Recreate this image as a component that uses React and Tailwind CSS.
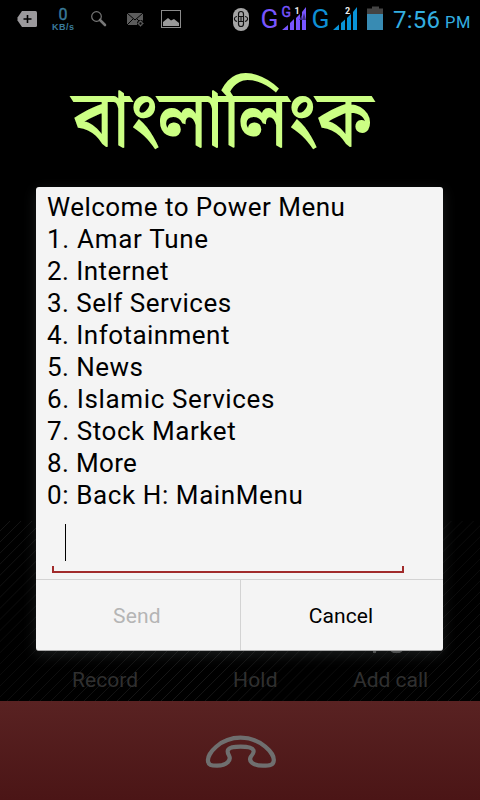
function StatusBar() {
  return (
    <header className="flex h-10 shrink-0 items-center bg-black">
      <svg className="h-10 w-[190px] shrink-0" viewBox="0 0 190 40" fill="none">
        <path d="M22 11H35.500Q37 11 37 12.500V25.500Q37 27 35.500 27H22L17.500 20.500V17.500Z" fill="#9b999c" />
        <path d="M27.500 15V23M23.500 19H31.500" stroke="#000" strokeWidth="1.600" />
        <text x="63" y="20" textAnchor="middle" fontSize="16" fontFamily="Roboto, sans-serif" fill="#3a7b9b" stroke="#3a7b9b" strokeWidth=".4">0</text>
        <text x="52" y="29.500" fontSize="9" textLength="22" fontFamily="Liberation Sans, sans-serif" fontWeight="700" fill="#3a7b9b">KB/s</text>
        <circle cx="96.500" cy="16.500" r="4.800" stroke="#777" strokeWidth="1.200" />
        <path d="M100 20L105 25" stroke="#777" strokeWidth="2.600" strokeLinecap="round" />
        <path d="M127 13H143V25H127Z" fill="#5c5c5c" />
        <path d="M127 13L135 20L143 13M127 25L133 19M143 25L137 19" stroke="#000" strokeWidth="1" />
        <circle cx="140.500" cy="23.500" r="3.500" fill="#000" />
        <circle cx="140.500" cy="23.500" r="1.800" stroke="#666" strokeWidth="1.200" />
        <path d="M140.500 20.500V21.500M140.500 25.500V26.500M137.500 23.500H138.500M142.500 23.500H143.500" stroke="#666" />
        <rect x="161.500" y="10.500" width="19" height="17" stroke="#8b8b8b" />
        <path d="M163 26V22L168 18L171 20.500L174 19L179 23V26Z" fill="#999" />
      </svg>
      <svg className="ml-auto h-10 w-[260px] shrink-0" viewBox="220 0 260 40" fill="none">
        <rect x="233" y="8" width="16" height="23" rx="8" fill="#a5a5a5" />
        <rect x="238.500" y="11.500" width="5" height="15" rx="2.500" stroke="#111" strokeWidth="1.200" />
        <path d="M238 16.500H244M238 21.500H244M237 16.500Q234 17 234.500 19.500Q235 21 237 21.500M245 16.500Q248 17 247.500 19.500Q247 21 245 21.500M241 16V22" stroke="#111" strokeWidth="1.100" />
        <text x="260.500" y="28" fontSize="26" textLength="18" lengthAdjust="spacingAndGlyphs" fontFamily="Roboto, sans-serif" fill="#7855ff">G</text>
        <text x="281.500" y="17.300" fontSize="14" textLength="9.500" lengthAdjust="spacingAndGlyphs" fontFamily="Roboto, sans-serif" fill="#7855ff" stroke="#7855ff" strokeWidth=".4">G</text>
        <path d="M282 30L288 25V30ZM290 23L294 19V30H290ZM296 18L300 14V30H296ZM302 12L306 7V30H302Z" fill="#7855ff" />
        <path d="M299 20L302 15V20ZM302 20L304 13L306 20Z" fill="#3d2b85" />
        <text x="294.500" y="14" fontSize="9" fontFamily="Roboto, sans-serif" fontWeight="700" fill="#eee">1</text>
        <text x="311.500" y="28" fontSize="26" textLength="18" lengthAdjust="spacingAndGlyphs" fontFamily="Roboto, sans-serif" fill="#0e8fd5">G</text>
        <path d="M333 30L339 24.500V30ZM341 23L345 19.500V30H341ZM347 18L351 14V30H347ZM353 12L357 7V30H353Z" fill="#0893d8" />
        <text x="345" y="14" fontSize="9" fontFamily="Roboto, sans-serif" fontWeight="700" fill="#eee">2</text>
        <path d="M372 6.500H379V8.500H383V15H367V8.500H372Z" fill="#444" />
        <path d="M367 14H383V30H367Z" fill="#388bb3" />
        <text x="393" y="28" fontSize="24" textLength="47" fontFamily="Roboto, sans-serif" fill="#33afe0">7:56</text>
        <text x="445" y="28" fontSize="16.500" textLength="25.500" fontFamily="Roboto, sans-serif" fill="#33afe0">PM</text>
      </svg>
    </header>
  );
}

const items = [
  ["Welcome to Power Menu", "tracking-[0.46px]"],
  ["1. Amar Tune", "tracking-[0.7px]"],
  ["2. Internet", "tracking-[0.45px]"],
  ["3. Self Services", "tracking-[0.48px]"],
  ["4. Infotainment", "tracking-[0.46px]"],
  ["5. News", "tracking-[0.45px]"],
  ["6. Islamic Services", "tracking-[0.63px]"],
  ["7. Stock Market", "tracking-[0.58px]"],
  ["8. More", "tracking-[0.35px]"],
  ["0: Back H: MainMenu", "tracking-[0.6px]"],
];

function Dialog() {
  return (
    <section className="absolute left-9 top-[187px] flex h-[464px] w-[407px] flex-col rounded-[3px] border-b border-[#aaa] bg-[#f4f4f4] shadow-[0_4px_14px_rgba(120,130,130,0.22)]">
      <div className="pl-[11px] pt-1 text-[26px] leading-8 text-black">
        {items.map(([label, tracking]) => (
          <div key={label} className={`whitespace-nowrap ${tracking}`}>{label}</div>
        ))}
      </div>
      <div className="ml-4 mt-[13px] flex h-[49px] w-[352px] flex-col justify-between">
        <div className="ml-[13px] h-[37px] w-px bg-black" />
        <div className="h-[7px] border-x-2 border-b-2 border-[#a12b2b]" />
      </div>
      <div className="mt-auto flex h-[71px] border-t border-[#d3d3d3] text-[21px]">
        <div className="flex w-[205px] items-center justify-center border-r border-[#d3d3d3] pr-0.5 pt-[3px] tracking-[0.2px] text-[#b5b5b5]">Send</div>
        <div className="flex flex-1 items-center justify-center pr-0.5 pt-[3px] tracking-[0.1px] text-black">Cancel</div>
      </div>
    </section>
  );
}

export default function App() {
  return (
    <main className="relative flex h-[800px] w-[480px] flex-col overflow-hidden bg-black font-[Roboto,sans-serif]">
      <StatusBar />
      <div className="h-[481px] shrink-0">
        <svg className="h-[147px] w-[480px]" viewBox="0 40 480 147">
          <text x="73.500" y="144.500" fontSize="77" textLength="298" lengthAdjust="spacingAndGlyphs" fill="#ccff84" stroke="#ccff84" strokeWidth="1.800" fontFamily="Noto Serif Bengali, Noto Sans Bengali, Lohit Bengali, FreeSerif, serif">বাংলালিংক</text>
        </svg>
      </div>
      <div className="flex h-[180px] shrink-0 flex-col justify-end bg-[repeating-linear-gradient(135deg,#000_0px,#000_6.8px,#171717_7.1px,#000_7.8px)] pb-[9px] text-[21px] leading-6 text-[#303030]">
        <svg className="mb-[15px] ml-[368px] h-6 w-10" viewBox="368 629 40 24" fill="none" stroke="#484848">
          <path d="M374.500 640V653" strokeWidth="3" />
          <circle cx="396.500" cy="645" r="7" strokeWidth="3" />
        </svg>
        <div className="flex">
          <span className="ml-[72px] w-[161px] tracking-[0.05px]">Record</span>
          <span className="w-[120px] tracking-[0.2px]">Hold</span>
          <span className="tracking-[0px]">Add call</span>
        </div>
      </div>
      <footer className="flex flex-1 justify-center bg-linear-to-b from-[#592222] to-[#4b1516]">
        <svg className="h-[99px] w-[80px]" viewBox="200 701 80 99" fill="none">
          <path d="M208 761C207 754 220 737.700 240.500 737.700S275 754 273.700 761C273.300 765 270 765.700 263 765.700C253 765.700 248 761 251 756.500C254 753 258 746.700 240.500 746.700C226 746.700 226.500 751 229 755.500C231.500 760 227 765.700 217 765.700C211 765.700 208.300 765 208 761Z" stroke="#6f6f6f" strokeWidth="4.200" />
        </svg>
      </footer>
      <Dialog />
    </main>
  );
}
